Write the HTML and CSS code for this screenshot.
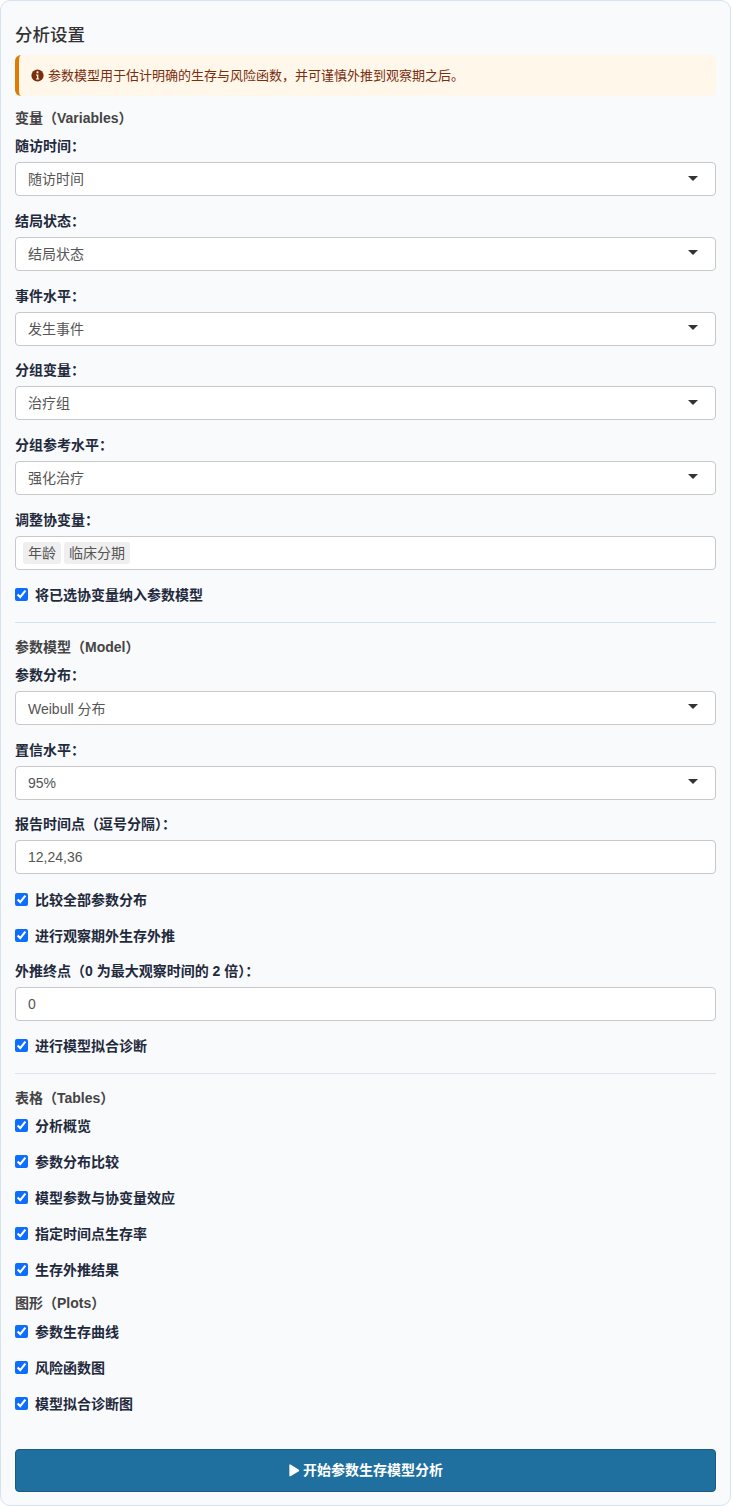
FILE: index.html
```html
<!DOCTYPE html>
<html lang="zh-CN">
<head>
  <meta charset="UTF-8" />
  <meta name="viewport" content="width=device-width, initial-scale=1.0"/>
  <title>分析设置</title>
  <link rel="stylesheet" href="styles.css">
</head>
<body>
  <div class="panel">
    <h2 class="panel-title">分析设置</h2>

    <div class="notice">
      <svg class="notice-icon" viewBox="0 0 16 16" aria-hidden="true">
        <circle cx="8" cy="8" r="6.5" fill="#7a2e0e"/>
        <rect x="7" y="3.6" width="2" height="2" fill="#fff7ea"/>
        <path d="M6.4 6.9h2.5v4.2h.9v1.2H6.4v-1.2h1V8.1h-1z" fill="#fff7ea"/>
      </svg>
      <span>参数模型用于估计明确的生存与风险函数，并可谨慎外推到观察期之后。</span>
    </div>

    <h4 class="section-title">变量（Variables）</h4>

    <div class="field">
      <label class="field-label">随访时间：</label>
      <div class="select"><span class="value">随访时间</span><i class="caret"></i></div>
    </div>
    <div class="field">
      <label class="field-label">结局状态：</label>
      <div class="select"><span class="value">结局状态</span><i class="caret"></i></div>
    </div>
    <div class="field">
      <label class="field-label">事件水平：</label>
      <div class="select"><span class="value">发生事件</span><i class="caret"></i></div>
    </div>
    <div class="field">
      <label class="field-label">分组变量：</label>
      <div class="select"><span class="value">治疗组</span><i class="caret"></i></div>
    </div>
    <div class="field">
      <label class="field-label">分组参考水平：</label>
      <div class="select"><span class="value">强化治疗</span><i class="caret"></i></div>
    </div>
    <div class="field field-before-check">
      <label class="field-label">调整协变量：</label>
      <div class="select tags">
        <span class="tag">年龄</span>
        <span class="tag">临床分期</span>
      </div>
    </div>
    <label class="check"><input type="checkbox" checked><span>将已选协变量纳入参数模型</span></label>

    <hr class="rule rule-blue">

    <h4 class="section-title">参数模型（Model）</h4>

    <div class="field">
      <label class="field-label">参数分布：</label>
      <div class="select"><span>Weibull 分布</span><i class="caret"></i></div>
    </div>
    <div class="field">
      <label class="field-label">置信水平：</label>
      <div class="select"><span>95%</span><i class="caret"></i></div>
    </div>
    <div class="field field-before-check">
      <label class="field-label">报告时间点（逗号分隔）：</label>
      <input class="text-input" type="text" value="12,24,36">
    </div>
    <label class="check"><input type="checkbox" checked><span>比较全部参数分布</span></label>
    <label class="check"><input type="checkbox" checked><span>进行观察期外生存外推</span></label>
    <div class="field field-before-check">
      <label class="field-label">外推终点（0 为最大观察时间的 2 倍）：</label>
      <input class="text-input" type="text" value="0">
    </div>
    <label class="check"><input type="checkbox" checked><span>进行模型拟合诊断</span></label>

    <hr class="rule">

    <h4 class="section-title section-checks">表格（Tables）</h4>
    <label class="check"><input type="checkbox" checked><span>分析概览</span></label>
    <label class="check"><input type="checkbox" checked><span>参数分布比较</span></label>
    <label class="check"><input type="checkbox" checked><span>模型参数与协变量效应</span></label>
    <label class="check"><input type="checkbox" checked><span>指定时间点生存率</span></label>
    <label class="check"><input type="checkbox" checked><span>生存外推结果</span></label>

    <h4 class="section-title section-tight">图形（Plots）</h4>
    <label class="check"><input type="checkbox" checked><span>参数生存曲线</span></label>
    <label class="check"><input type="checkbox" checked><span>风险函数图</span></label>
    <label class="check"><input type="checkbox" checked><span>模型拟合诊断图</span></label>

    <button class="run-btn" type="button">
      <svg class="run-icon" viewBox="0 0 12 14" aria-hidden="true"><path d="M1 1.2c0-.6.6-1 1.2-.7l9 5.6c.5.4.5 1.2 0 1.6l-9 5.6c-.6.3-1.2-.1-1.2-.7z" fill="#fff"/></svg>
      <span class="run-text">开始参数生存模型分析</span>
    </button>
  </div>
</body>
</html>
```

FILE: styles.css
```css
* {
  margin: 0;
  padding: 0;
  box-sizing: border-box;
}

body {
  font-family: "Liberation Sans", "Noto Sans CJK SC", sans-serif;
  background: #fff;
  color: #333;
  width: 732px;
}

.panel {
  width: 731px;
  height: 1506px;
  padding: 14px;
  background: #f9fafc;
  border: 1px solid #d9e2ef;
  border-radius: 10px;
}

.panel-title {
  font-size: 17.5px;
  font-weight: 500;
  line-height: 40.3px;
  color: #333;
}

.notice {
  display: flex;
  align-items: center;
  gap: 3px;
  height: 41px;
  padding-left: 11px;
  font-size: 13px;
  color: #7a2e0e;
  background: #fff7ea;
  border-left: 4px solid #e07b00;
  border-radius: 6px;
}

.notice span {
  padding-bottom: 2px;
}

.notice-icon {
  width: 15px;
  height: 15px;
  flex: none;
}

.section-title {
  font-size: 14px;
  font-weight: 700;
  line-height: 20px;
  margin-top: 12px;
  margin-bottom: 9px;
  color: #444;
}

.section-checks {
  margin-bottom: 8px;
}

.section-tight {
  margin-top: -2.9px;
}

.field {
  margin-bottom: 15.67px;
}

.field-before-check {
  margin-bottom: 15.33px;
}

.field-label {
  display: block;
  font-size: 14px;
  font-weight: 700;
  line-height: 18px;
  padding-bottom: 2px;
  margin-bottom: 5px;
  color: #1f2a3c;
}

.select,
.text-input {
  display: flex;
  align-items: center;
  justify-content: space-between;
  width: 100%;
  height: 34px;
  padding: 0 12px;
  font-family: inherit;
  font-size: 14px;
  color: #555;
  background: #fff;
  border: 1px solid #c9c9c9;
  border-radius: 4px;
}

.value {
  padding-bottom: 2px;
}

.caret {
  width: 0;
  height: 0;
  margin-right: 5px;
  margin-bottom: 2px;
  border-left: 5px solid transparent;
  border-right: 5px solid transparent;
  border-top: 5px solid #333;
}

.tags {
  justify-content: flex-start;
  gap: 3px;
  padding: 0 7px;
}

.tag {
  padding: 0 5px;
  line-height: 22px;
  background: #efefef;
  border-radius: 3px;
}

.check {
  display: flex;
  align-items: center;
  gap: 7px;
  height: 20px;
  margin-bottom: 16px;
  font-size: 14px;
  font-weight: 700;
  color: #1f2a3c;
}

.check span {
  padding-bottom: 2px;
}

.check input {
  width: 13px;
  height: 13px;
  flex: none;
  accent-color: #0d6efd;
}

.rule {
  border: 0;
  border-top: 1px solid #dde3ec;
  margin-top: 17px;
  margin-bottom: 14px;
}

.rule-blue {
  border-top-color: #d5e2f2;
}

.run-btn {
  display: flex;
  align-items: center;
  justify-content: center;
  gap: 3px;
  width: 100%;
  height: 43px;
  margin-top: 35px;
  font-family: inherit;
  font-size: 14px;
  font-weight: 700;
  color: #fff;
  background: #1f6f9f;
  border: 1px solid #1a5a85;
  border-radius: 4px;
}

.run-text {
  padding-bottom: 2px;
}

.run-icon {
  width: 12px;
  height: 13px;
}
```
